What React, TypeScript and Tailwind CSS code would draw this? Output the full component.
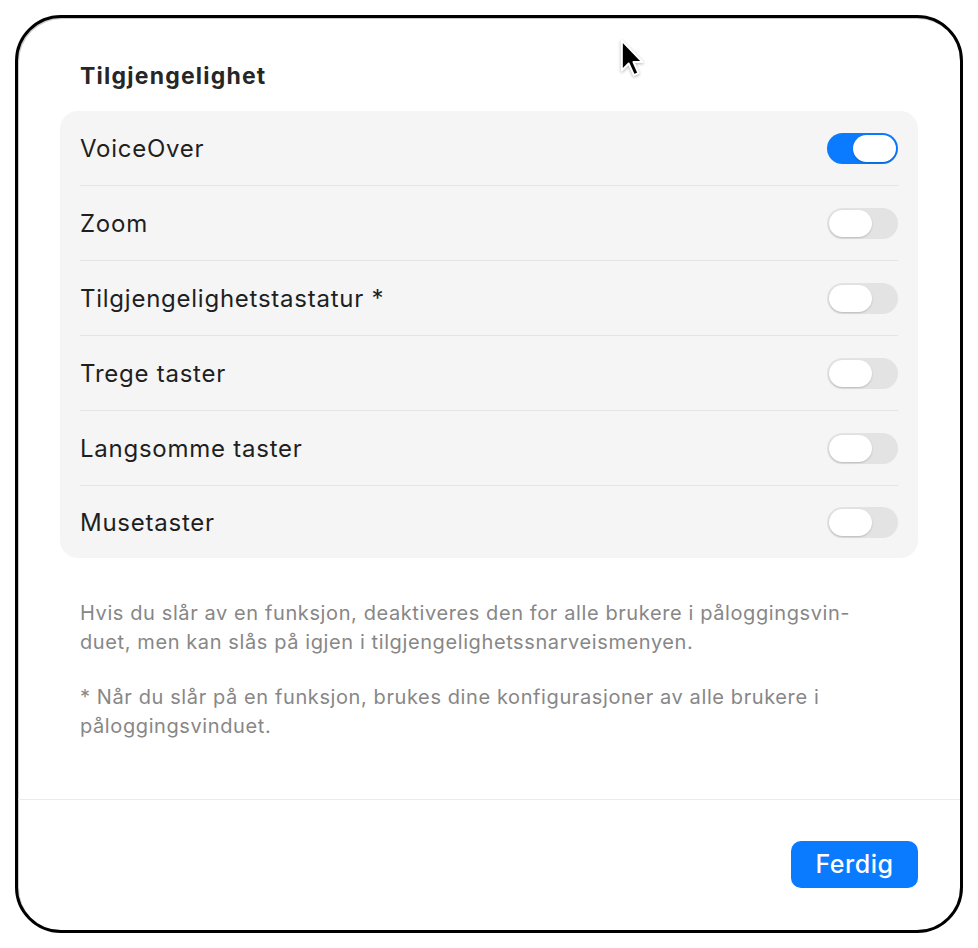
import { useState } from "react";

interface Setting {
  label: string;
  on: boolean;
}

const initialSettings: Setting[] = [
  { label: "VoiceOver", on: true },
  { label: "Zoom", on: false },
  { label: "Tilgjengelighetstastatur *", on: false },
  { label: "Trege taster", on: false },
  { label: "Langsomme taster", on: false },
  { label: "Musetaster", on: false },
];

function Toggle({ on, onClick }: { on: boolean; onClick: () => void }) {
  return (
    <button
      onClick={onClick}
      className={`flex h-[31px] w-[71px] items-center rounded-full p-[2px] ${
        on ? "justify-end bg-[#0a7aff]" : "justify-start bg-[#e3e3e3]"
      }`}
    >
      <span className="h-[27px] w-[43px] rounded-full bg-white shadow-[0_1px_2px_rgba(0,0,0,0.18)]" />
    </button>
  );
}

export default function App() {
  const [settings, setSettings] = useState(initialSettings);

  const toggle = (idx: number) => {
    setSettings((prev) => prev.map((s, i) => (i === idx ? { ...s, on: !s.on } : s)));
  };

  return (
    <div
      className="relative h-[948px] w-[978px] bg-white p-[15px] text-[#1f1f1f]"
      style={{ fontFamily: "Inter, 'Noto Sans', sans-serif" }}
    >
      <div className="flex h-full flex-col rounded-[46px] border-[3px] border-black bg-white shadow-[inset_1px_1px_0_#c9cccc]">
        <div className="px-[42px] pt-[43px]">
          <h1 className="pl-5 text-[23px] font-bold leading-[30px] tracking-[1.2px] text-[#262626]">
            Tilgjengelighet
          </h1>

          {/* settings list */}
          <div className="mt-[20px] rounded-[18px] bg-[#f5f5f5] px-5">
            {settings.map((s, idx) => (
              <div
                key={s.label}
                className={`flex items-center justify-between ${idx === settings.length - 1 ? "h-[72px]" : "h-[75px] border-b border-[#e4e4e4]"}`}
              >
                <span className="pt-px text-[24px] tracking-[0.75px]">{s.label}</span>
                <Toggle on={s.on} onClick={() => toggle(idx)} />
              </div>
            ))}
          </div>

          <div className="mt-[41px] pl-5 text-[20px] leading-[29px] tracking-[0.6px] text-[#878787]">
            <p>
              Hvis du slår av en funksjon, deaktiveres den for alle brukere i påloggingsvin-
              <br />
              duet, men kan slås på igjen i tilgjengelighetssnarveismenyen.
            </p>
            <p className="mt-[26px]">
              * Når du slår på en funksjon, brukes dine konfigurasjoner av alle brukere i
              <br />
              påloggingsvinduet.
            </p>
          </div>
        </div>

        <div className="mt-auto border-t border-[#ececec]">
          <div className="flex justify-end px-[42px] pt-[41px] pb-[42px]">
            <button className="h-[47px] w-[127px] rounded-[10px] bg-[#0a7aff] text-[25px] font-medium tracking-[0.5px] text-white">
              Ferdig
            </button>
          </div>
        </div>
      </div>

      {/* mouse pointer */}
      <svg
        className="absolute left-[617px] top-[36px] drop-shadow-[0_1px_1.5px_rgba(0,0,0,0.3)]"
        width="28"
        height="46"
        viewBox="0 0 24 40"
      >
        <path
          d="M4 4 L4 30 L10 24 L14.5 34 L18.5 32.3 L14.2 22.6 L22 22.6 Z"
          fill="#000"
          stroke="#fff"
          strokeWidth="1.8"
          strokeLinejoin="round"
        />
      </svg>
    </div>
  );
}
